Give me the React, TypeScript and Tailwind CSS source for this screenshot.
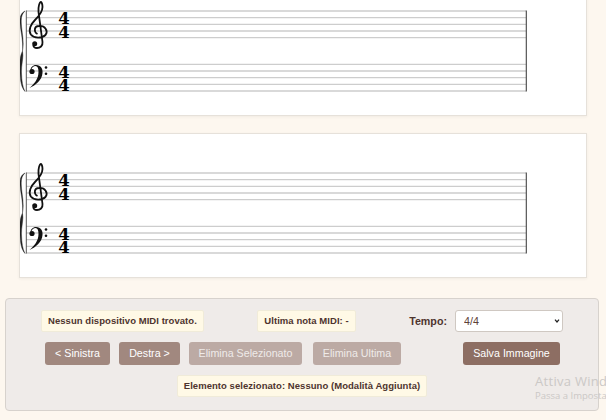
const LINES = [40, 46.6, 53.3, 60, 66.6, 93.3, 100, 106.6, 113.3, 120];

function Staff() {
  return (
    <svg viewBox="20 1 566 143" className="block h-[143px] w-[566px]">
      {LINES.map((y) => (
        <line key={y} x1="26" x2="526" y1={y} y2={y} stroke="#cdcdcd" strokeWidth="1.3" />
      ))}
      <line x1="26.3" x2="26.3" y1="39.5" y2="120.5" stroke="#555" strokeWidth="1" />
      <line x1="526.3" x2="526.3" y1="39.5" y2="120.5" stroke="#444" strokeWidth="1.1" />
      <path
        d="M25 40 C21 42 19.5 46 20 52 C20.5 60 23.5 70 22.5 80 C19.5 86 19.3 94 20 102 C20.5 110 21 116 25 120.5 C22.5 116 21.8 110 21.5 102 C21 94 24 86 22.5 80 C24.5 70 21.5 60 21.3 52 C21 46 22 43 25 40 Z"
        fill="#222"
        stroke="#222"
        strokeWidth="0.4"
      />
      <g transform="translate(0 29)">
        <path
          d="M37.5 34 C33.5 32 34 26 39 26 C45 25.5 48.5 31 45.5 35 C42 38.5 34 38.5 30.8 34.5 C28 30 31 24 35 20 C39 16 42.5 12 42.5 7 C42.5 4 41.5 2 41 2 C39.5 2 38 7 38.5 12 L42.5 42 C43 46 40 48 37 48 C34.5 48 33 46.5 33.5 45"
          fill="none"
          stroke="#111"
          strokeWidth="1.8"
        />
        <circle cx="34.7" cy="43.7" r="2.5" fill="#111" />
        <path
          d="M30.5 72 C30 67 33 65 36 65 C41 65 43 69 42.5 73 C42 80 36 85 29.5 88 C34 84 38.5 79 38.5 72 C38.5 68 37.5 66 35.5 66 C33.5 66 32 67.5 31.5 69 Z"
          fill="#111"
        />
        <circle cx="32" cy="71.5" r="2.6" fill="#111" />
        <circle cx="46" cy="67.5" r="1.3" fill="#111" />
        <circle cx="46" cy="73.8" r="1.3" fill="#111" />
      </g>
      <g fontFamily="'DejaVu Serif', serif" fontWeight="700" fontSize="16.5" fill="#000" textAnchor="middle">
        <text x="64" y="53">4</text>
        <text x="64" y="66.5">4</text>
        <text x="64" y="106.5">4</text>
        <text x="64" y="120">4</text>
      </g>
    </svg>
  );
}

function Card() {
  return (
    <div className="mx-[19px] w-[568px] border border-[#e6e1da] bg-white shadow-[0_1px_3px_rgba(0,0,0,0.05)]">
      <Staff />
    </div>
  );
}

function Info({ children }: { children: React.ReactNode }) {
  return (
    <div className="flex h-[22px] items-center whitespace-nowrap rounded-[2px] border border-[#f0ebd9] bg-[#fff9e6] px-[6px] text-[9.5px] font-bold tracking-[0.05px] text-[#4e342e]">
      {children}
    </div>
  );
}

function Btn({ label, cls }: { label: string; cls: string }) {
  return (
    <button className={`flex h-[23px] items-center justify-center rounded-[3px] text-[10.7px] ${cls}`}>{label}</button>
  );
}

export default function App() {
  return (
    <div className="h-[420px] w-[606px] overflow-hidden bg-[#fdf7ef] font-['Liberation_Sans',Arial,sans-serif]">
      <div className="relative -mt-[29px] flex flex-col">
        <Card />
        <div className="mt-[17px]">
          <Card />
        </div>
        <div className="mx-[5px] mt-[20px] flex h-[113px] w-[594px] flex-col rounded-[4px] border border-[#d7d2cd] bg-[#efebe9] pt-[11px]">
          <div className="flex items-center justify-between pl-[35px] pr-[35px]">
            <Info>Nessun dispositivo MIDI trovato.</Info>
            <Info>Ultima nota MIDI: -</Info>
            <div className="flex items-center gap-2">
              <span className="text-[10.7px] font-bold text-[#4e342e]">Tempo:</span>
              <div className="relative">
                <select className="block h-[22px] w-[108px] appearance-none rounded-[3px] border border-[#cfc8c2] bg-white pl-[8px] text-[10.7px] text-[#5d4037]">
                  <option>4/4</option>
                </select>
                <svg viewBox="0 0 8 6" className="pointer-events-none absolute right-[3px] top-[9px] h-[4px] w-[6px]">
                  <path d="M1 1 L4 4.5 L7 1" fill="none" stroke="#222" strokeWidth="1.8" />
                </svg>
              </div>
            </div>
          </div>
          <div className="mt-[10px] flex items-center pl-[39px]">
            <Btn label="< Sinistra" cls="w-[65px] bg-[#a1887f] text-white" />
            <Btn label="Destra >" cls="ml-[9px] w-[61px] bg-[#a1887f] text-white" />
            <Btn label="Elimina Selezionato" cls="ml-[9px] w-[113px] bg-[#bcaaa4] text-[#efebe9]" />
            <Btn label="Elimina Ultima" cls="ml-[11px] w-[88px] bg-[#bcaaa4] text-[#efebe9]" />
            <Btn label="Salva Immagine" cls="ml-[62px] w-[97px] bg-[#8d6e63] text-white" />
          </div>
          <div className="mt-[10px] flex justify-center">
            <Info>Elemento selezionato: Nessuno (Modalità Aggiunta)</Info>
          </div>
        </div>
        <div className="absolute left-[535px] top-[402px] whitespace-nowrap font-['Open_Sans',sans-serif] text-[#cbc8c6]">
          <div className="text-[13px] leading-[16px] tracking-[0.3px]">Attiva Windows</div>
          <div className="text-[9.5px] leading-[13px]">Passa a Impostazioni</div>
        </div>
      </div>
    </div>
  );
}
